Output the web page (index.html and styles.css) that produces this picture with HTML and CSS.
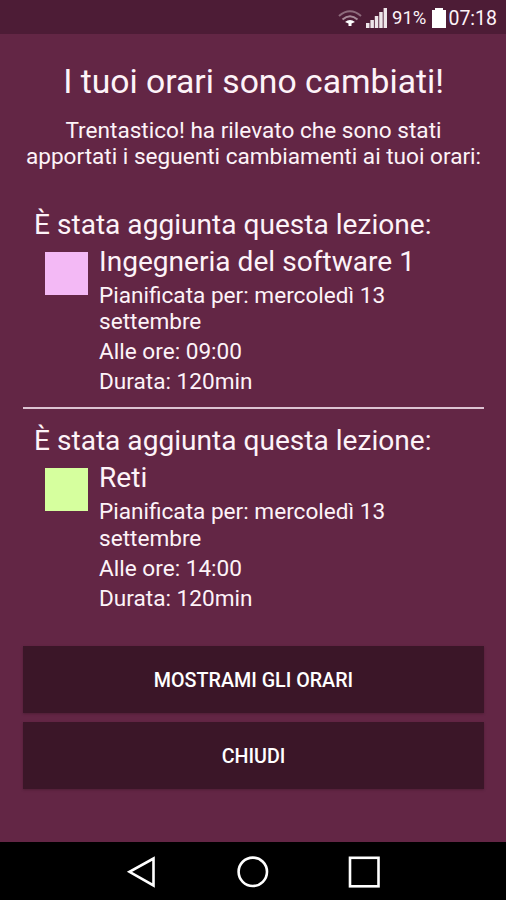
FILE: index.html
```html
<!DOCTYPE html>
<html lang="it">
<head>
  <meta charset="UTF-8">
  <meta name="viewport" content="width=device-width, initial-scale=1.0">
  <title>Trentastico</title>
  <link rel="stylesheet" href="styles.css">
</head>
<body>
  <header class="status-bar">
    <svg class="wifi" width="24" height="19" viewBox="0 0 24 19" fill="none" stroke-width="2.1">
      <path d="M1 7Q12 -2.500 23 7" stroke="#8d6b7c"/>
      <path d="M4.500 10.500Q12 4 19.500 10.500" stroke="#a88c9a"/>
      <path d="M7 13Q12 9 17 13L13.500 14.500V17h-3v-2.500Z" fill="#fff"/>
    </svg>
    <svg class="signal" width="21" height="20" viewBox="0 0 21 20" fill="#eee6ea">
      <path d="M0 15h3.500v5H0zM4.400 12h3.500v8H4.400zM8.800 8h3.500v12H8.800zM13.200 4h3.500v16h-3.500zM17.600 0H21v20h-3.400z"/>
    </svg>
    <span class="percent">91%</span>
    <svg class="battery" width="14" height="20" viewBox="0 0 14 20">
      <path d="M3 0h8v2h3v18H0V2h3z" fill="#fff"/>
    </svg>
    <span class="clock">07:18</span>
  </header>

  <main>
    <h1>I tuoi orari sono cambiati!</h1>
    <p class="intro">Trentastico! ha rilevato che sono stati<br>apportati i seguenti cambiamenti ai tuoi orari:</p>

    <section class="change">
      <h2>È stata aggiunta questa lezione:</h2>
      <div class="lesson">
        <div class="color pink"></div>
        <div class="details">
          <h3>Ingegneria del software 1</h3>
          <p>Pianificata per: mercoledì 13 settembre</p>
          <p>Alle ore: 09:00</p>
          <p>Durata: 120min</p>
        </div>
      </div>
    </section>

    <section class="change">
      <h2>È stata aggiunta questa lezione:</h2>
      <div class="lesson">
        <div class="color green"></div>
        <div class="details">
          <h3>Reti</h3>
          <p>Pianificata per: mercoledì 13 settembre</p>
          <p>Alle ore: 14:00</p>
          <p>Durata: 120min</p>
        </div>
      </div>
    </section>

    <div class="buttons">
      <button>MOSTRAMI GLI ORARI</button>
      <button>CHIUDI</button>
    </div>
  </main>

  <nav class="nav-bar">
    <svg width="506" height="58" viewBox="0 0 506 58" fill="none" stroke="#fff" stroke-width="2.600">
      <path d="M153.500 16.500v27L129.500 29.800z"/>
      <circle cx="252.800" cy="29.800" r="14.200"/>
      <rect x="350" y="15.800" width="28.500" height="28.500"/>
    </svg>
  </nav>
</body>
</html>
```
FILE: styles.css
```css
* {
  box-sizing: border-box;
}
body {
  margin: 0;
  height: 900px;
  display: flex;
  flex-direction: column;
  overflow: hidden;
  font-family: Roboto, sans-serif;
  background-color: #632645;
  color: #fdf3f8;
}
h1, h2, h3, p {
  margin: 0;
  font-weight: 400;
}
.status-bar {
  height: 34px;
  flex: none;
  display: flex;
  align-items: center;
  justify-content: flex-end;
  padding: 2px 9px 0 0;
  background-color: #4d1c36;
  font-size: 19.5px;
}
.wifi {
  margin-right: 4px;
}
.signal {
  margin-right: 5px;
}
.percent {
  font-size: 18.5px;
  margin-right: 6px;
}
.battery {
  margin-right: 2px;
}
main {
  flex: 1;
  padding: 28px 22px 0 23px;
}
h1 {
  font-size: 33.7px;
  line-height: 39px;
  text-align: center;
}
.intro {
  margin: 16.5px -10px 0;
  font-size: 22.6px;
  line-height: 26.4px;
  text-align: center;
}
.change {
  height: 216px;
  padding: 15.5px 11px 0;
}
.intro + .change {
  height: 238.5px;
  padding-top: 37.5px;
  border-bottom: 2px solid #dcc3d2;
}
h2, h3 {
  font-size: 28.1px;
  line-height: 33px;
}
.lesson {
  display: flex;
  gap: 11px;
  padding: 4px 0 0 11px;
}
.color {
  width: 43px;
  height: 43px;
  margin-top: 7px;
}
.pink {
  background-color: #f3b9f5;
}
.green {
  background-color: #d6ff9e;
}
.details {
  width: 320px;
}
.details p {
  margin-top: 4px;
  font-size: 22.6px;
  line-height: 26.2px;
}
.details h3 + p {
  margin-top: 5px;
}
.buttons {
  display: flex;
  flex-direction: column;
  gap: 8.5px;
  margin-top: 21px;
}
button {
  height: 67.5px;
  padding: 2px 0 0;
  border: none;
  background-color: #3b1628;
  box-shadow: 0 1px 2px rgba(59, 22, 40, 0.5);
  color: #fff;
  font: 500 19.7px Roboto, sans-serif;
  cursor: pointer;
}
.nav-bar {
  height: 58px;
  flex: none;
  background-color: #000;
}
```
